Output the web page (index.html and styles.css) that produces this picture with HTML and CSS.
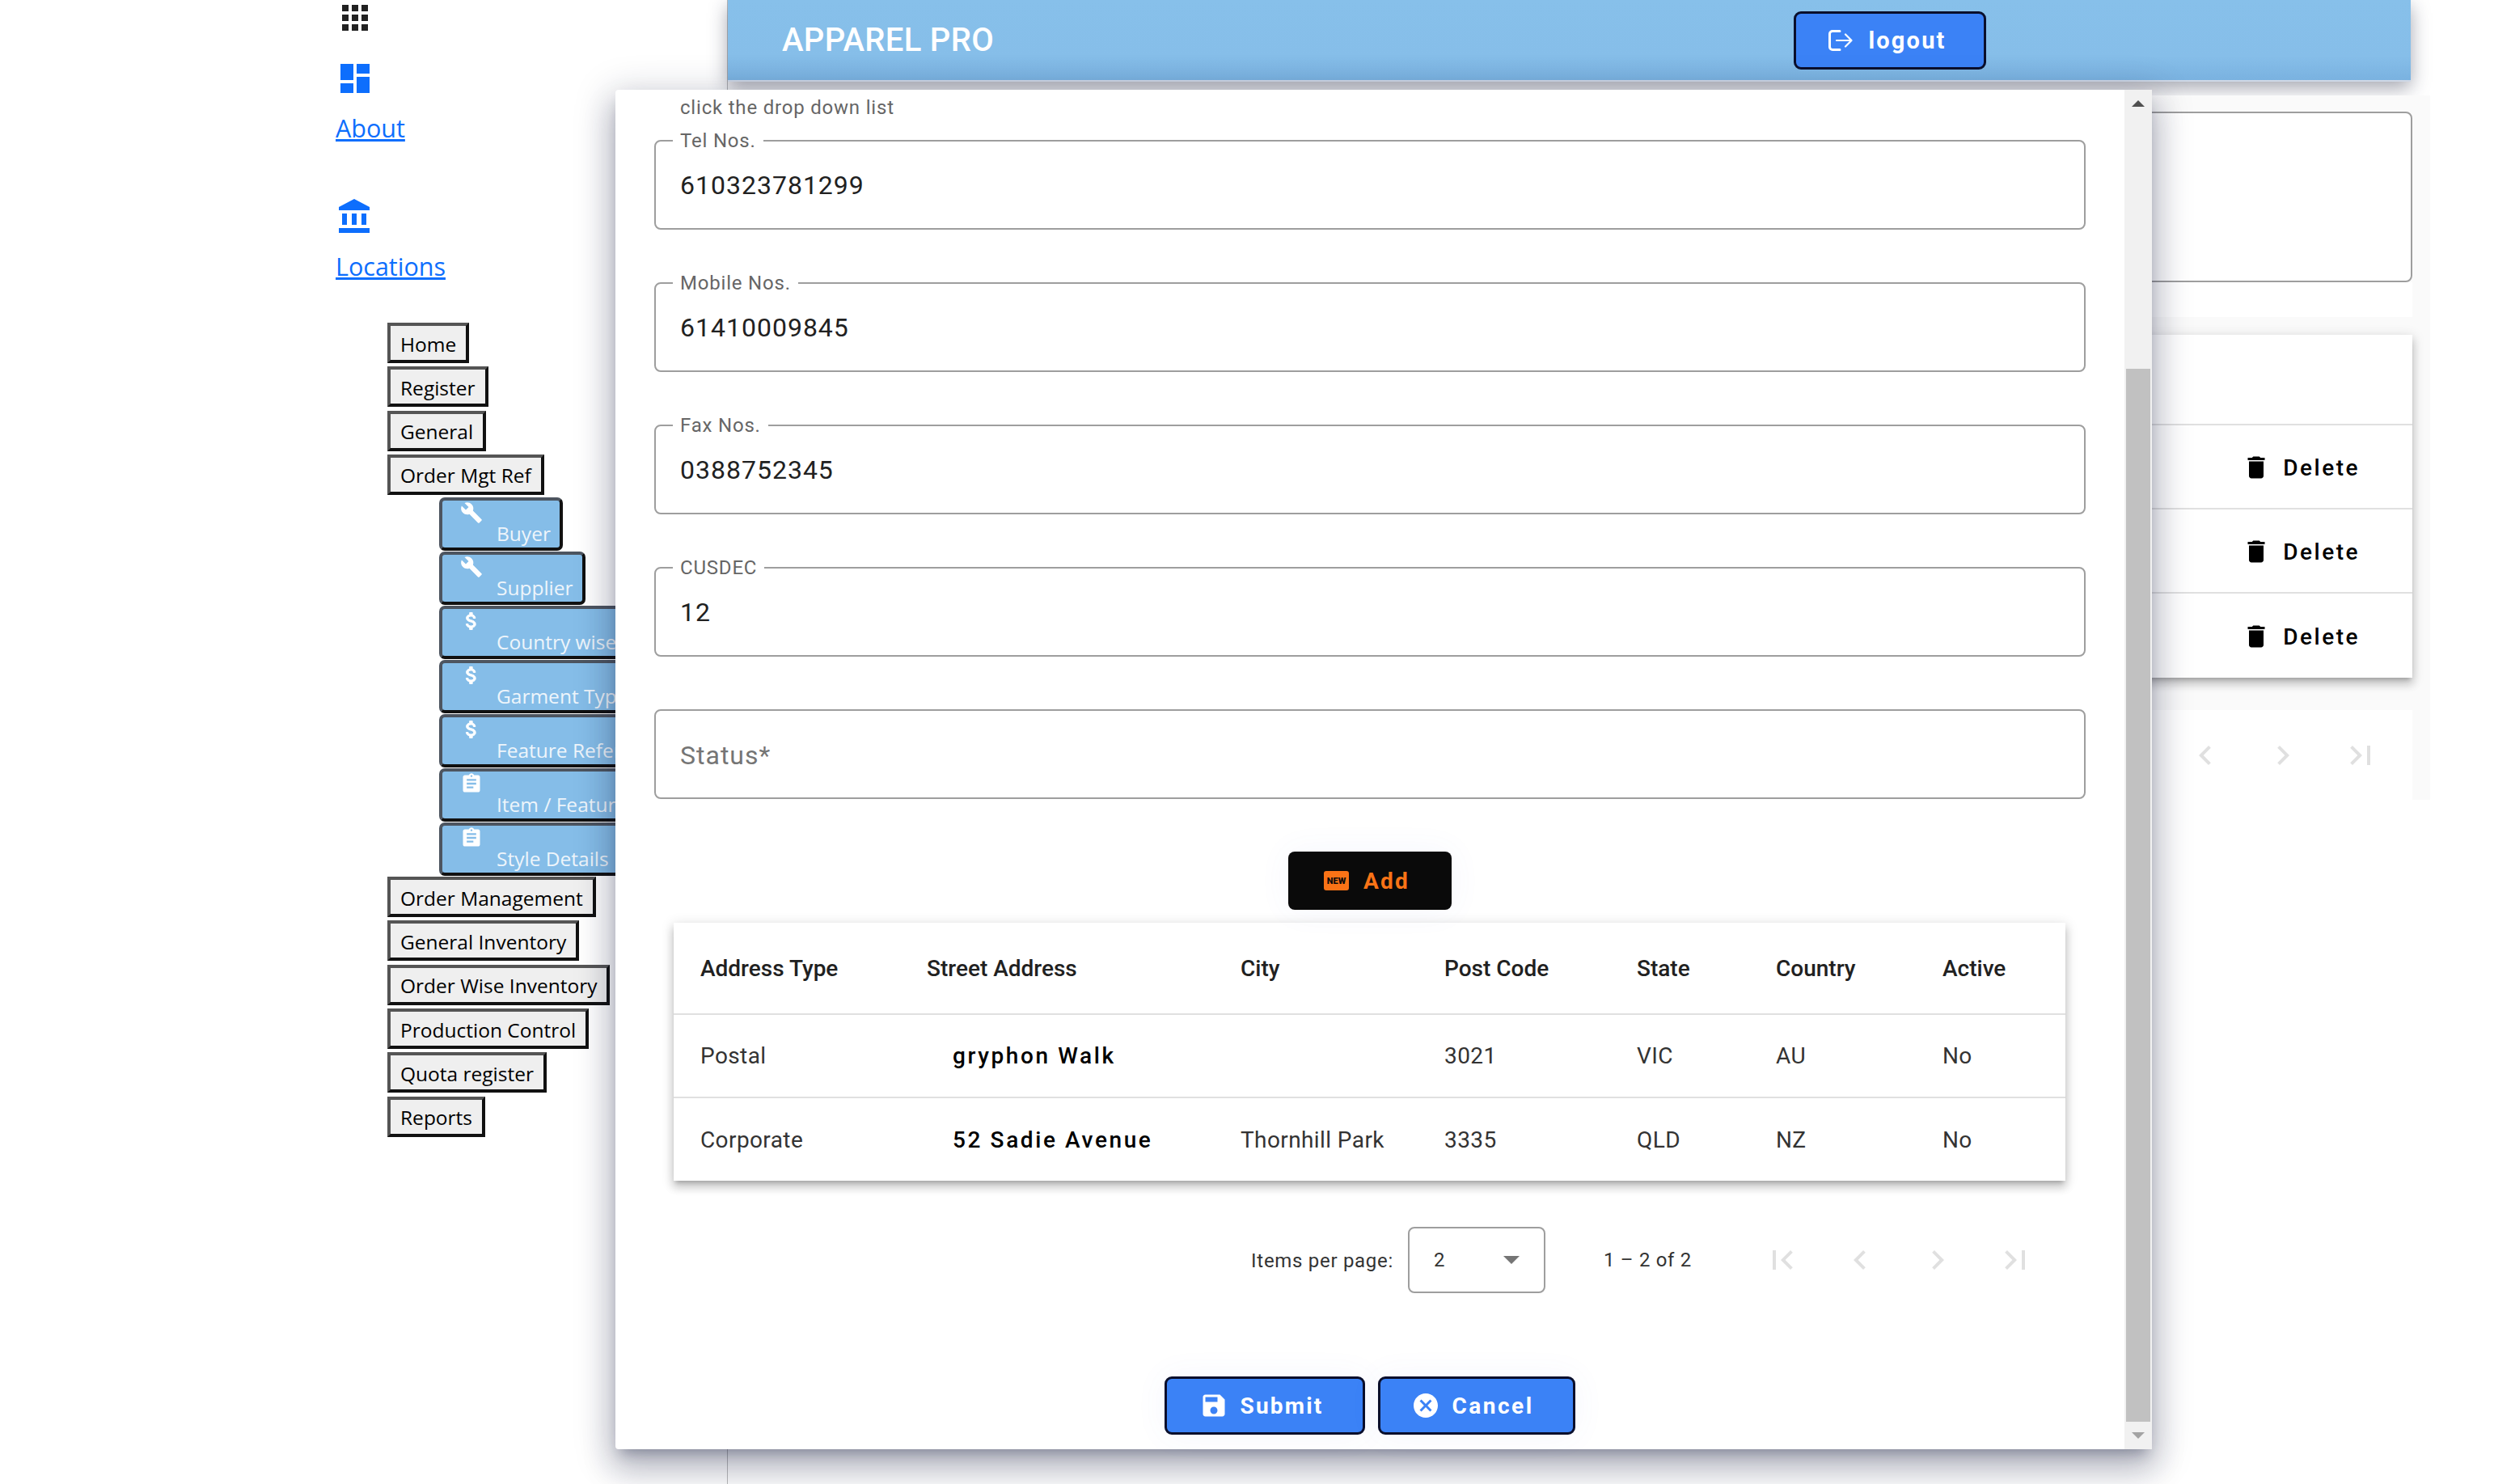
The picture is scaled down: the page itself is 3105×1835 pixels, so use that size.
FILE: index.html
```html
<!DOCTYPE html>
<html lang="en">
<head>
  <meta charset="UTF-8">
  <title>Apparel Pro</title>
  <link rel="stylesheet" href="styles.css">
</head>
<body>
  <!-- Side navigation -->
  <aside class="sidebar">
    <svg class="side-icon apps-icon" viewBox="0 0 24 24"><path d="M4 8h4V4H4v4zm6 12h4v-4h-4v4zm-6 0h4v-4H4v4zm0-6h4v-4H4v4zm6 0h4v-4h-4v4zm6-10v4h4V4h-4zm-6 4h4V4h-4v4zm6 6h4v-4h-4v4zm0 6h4v-4h-4v4z"/></svg>
    <svg class="side-icon" viewBox="0 0 24 24"><path d="M3 13h8V3H3v10zm0 8h8v-6H3v6zm10 0h8V11h-8v10zm0-18v6h8V3h-8z"/></svg>
    <a class="side-link" href="#">About</a>
    <svg class="side-icon" viewBox="0 0 24 24"><path d="M4 10v7h3v-7H4zm6 0v7h3v-7h-3zM2 22h19v-3H2v3zm14-12v7h3v-7h-3zm-4.5-9L2 6v2h19V6l-9.5-5z"/></svg>
    <a class="side-link" href="#">Locations</a>

    <nav class="menu">
      <button class="menu-btn">Home</button>
      <button class="menu-btn">Register</button>
      <button class="menu-btn">General</button>
      <button class="menu-btn">Order Mgt Ref</button>
      <div class="submenu">
        <button class="sub-btn">
          <svg viewBox="0 0 24 24"><path d="M22.7 19l-9.1-9.1c.9-2.3.4-5-1.5-6.9-2-2-5-2.4-7.4-1.3L9 6 6 9 1.6 4.7C.4 7.1.9 10.1 2.9 12.1c1.9 1.9 4.6 2.4 6.9 1.5l9.1 9.1c.4.4 1 .4 1.4 0l2.3-2.3c.5-.4.5-1.1.1-1.4z"/></svg>
          <span>Buyer</span>
        </button>
        <button class="sub-btn">
          <svg viewBox="0 0 24 24"><path d="M22.7 19l-9.1-9.1c.9-2.3.4-5-1.5-6.9-2-2-5-2.4-7.4-1.3L9 6 6 9 1.6 4.7C.4 7.1.9 10.1 2.9 12.1c1.9 1.9 4.6 2.4 6.9 1.5l9.1 9.1c.4.4 1 .4 1.4 0l2.3-2.3c.5-.4.5-1.1.1-1.4z"/></svg>
          <span>Supplier</span>
        </button>
        <button class="sub-btn">
          <svg class="money-icon" viewBox="0 0 24 24"><path d="M11.8 10.9c-2.27-.59-3-1.2-3-2.15 0-1.09 1.01-1.85 2.7-1.85 1.78 0 2.44.85 2.5 2.1h2.21c-.07-1.72-1.12-3.3-3.21-3.81V3h-3v2.16c-1.94.42-3.5 1.68-3.5 3.61 0 2.31 1.91 3.46 4.7 4.13 2.5.6 3 1.48 3 2.41 0 .69-.49 1.79-2.7 1.79-2.06 0-2.87-.92-2.98-2.1h-2.2c.12 2.19 1.76 3.42 3.68 3.83V21h3v-2.15c1.95-.37 3.5-1.5 3.5-3.55 0-2.84-2.43-3.81-4.7-4.4z"/></svg>
          <span>Country wise Reference</span>
        </button>
        <button class="sub-btn">
          <svg class="money-icon" viewBox="0 0 24 24"><path d="M11.8 10.9c-2.27-.59-3-1.2-3-2.15 0-1.09 1.01-1.85 2.7-1.85 1.78 0 2.44.85 2.5 2.1h2.21c-.07-1.72-1.12-3.3-3.21-3.81V3h-3v2.16c-1.94.42-3.5 1.68-3.5 3.61 0 2.31 1.91 3.46 4.7 4.13 2.5.6 3 1.48 3 2.41 0 .69-.49 1.79-2.7 1.79-2.06 0-2.87-.92-2.98-2.1h-2.2c.12 2.19 1.76 3.42 3.68 3.83V21h3v-2.15c1.95-.37 3.5-1.5 3.5-3.55 0-2.84-2.43-3.81-4.7-4.4z"/></svg>
          <span>Garment Type Reference</span>
        </button>
        <button class="sub-btn">
          <svg class="money-icon" viewBox="0 0 24 24"><path d="M11.8 10.9c-2.27-.59-3-1.2-3-2.15 0-1.09 1.01-1.85 2.7-1.85 1.78 0 2.44.85 2.5 2.1h2.21c-.07-1.72-1.12-3.3-3.21-3.81V3h-3v2.16c-1.94.42-3.5 1.68-3.5 3.61 0 2.31 1.91 3.46 4.7 4.13 2.5.6 3 1.48 3 2.41 0 .69-.49 1.79-2.7 1.79-2.06 0-2.87-.92-2.98-2.1h-2.2c.12 2.19 1.76 3.42 3.68 3.83V21h3v-2.15c1.95-.37 3.5-1.5 3.5-3.55 0-2.84-2.43-3.81-4.7-4.4z"/></svg>
          <span>Feature Reference</span>
        </button>
        <button class="sub-btn">
          <svg viewBox="0 0 24 24"><path d="M19 3h-4.18C14.4 1.84 13.3 1 12 1c-1.3 0-2.4.84-2.82 2H5c-1.1 0-2 .9-2 2v14c0 1.1.9 2 2 2h14c1.1 0 2-.9 2-2V5c0-1.1-.9-2-2-2zm-7 0c.55 0 1 .45 1 1s-.45 1-1 1-1-.45-1-1 .45-1 1-1zm2 14H7v-2h7v2zm3-4H7v-2h10v2zm0-4H7V7h10v2z"/></svg>
          <span>Item / Feature</span>
        </button>
        <button class="sub-btn">
          <svg viewBox="0 0 24 24"><path d="M19 3h-4.18C14.4 1.84 13.3 1 12 1c-1.3 0-2.4.84-2.82 2H5c-1.1 0-2 .9-2 2v14c0 1.1.9 2 2 2h14c1.1 0 2-.9 2-2V5c0-1.1-.9-2-2-2zm-7 0c.55 0 1 .45 1 1s-.45 1-1 1-1-.45-1-1 .45-1 1-1zm2 14H7v-2h7v2zm3-4H7v-2h10v2zm0-4H7V7h10v2z"/></svg>
          <span>Style Details</span>
        </button>
      </div>
      <button class="menu-btn">Order Management</button>
      <button class="menu-btn">General Inventory</button>
      <button class="menu-btn">Order Wise Inventory</button>
      <button class="menu-btn">Production Control</button>
      <button class="menu-btn">Quota register</button>
      <button class="menu-btn">Reports</button>
    </nav>
  </aside>

  <!-- Page behind the dialog -->
  <main class="main">
    <header class="topbar">
      <span class="brand">APPAREL PRO</span>
      <button class="blue-btn logout-btn">
        <svg class="logout-icon" viewBox="0 0 30 26"><path d="M14 1.5H5A3.5 3.5 0 0 0 1.5 5v16A3.5 3.5 0 0 0 5 24.5h9"/><path class="thin" d="M10 13h18.5M21 5.500l7.5 7.5-7.5 7.5"/></svg>
        logout
      </button>
    </header>

    <section class="panel">
      <div class="panel-field"></div>
      <div class="panel-gap"></div>
      <div class="card">
        <div class="card-row"></div>
        <div class="card-row">
          <svg viewBox="0 0 24 24"><path d="M6 19c0 1.1.9 2 2 2h8c1.1 0 2-.9 2-2V7H6v12zM19 4h-3.5l-1-1h-5l-1 1H5v2h14V4z"/></svg>
          <span>Delete</span>
        </div>
        <div class="card-row">
          <svg viewBox="0 0 24 24"><path d="M6 19c0 1.1.9 2 2 2h8c1.1 0 2-.9 2-2V7H6v12zM19 4h-3.5l-1-1h-5l-1 1H5v2h14V4z"/></svg>
          <span>Delete</span>
        </div>
        <div class="card-row">
          <svg viewBox="0 0 24 24"><path d="M6 19c0 1.1.9 2 2 2h8c1.1 0 2-.9 2-2V7H6v12zM19 4h-3.5l-1-1h-5l-1 1H5v2h14V4z"/></svg>
          <span>Delete</span>
        </div>
      </div>
      <div class="panel-pager">
        <svg viewBox="0 0 24 24"><path d="M15.41 7.41L14 6l-6 6 6 6 1.41-1.41L10.83 12z"/></svg>
        <svg viewBox="0 0 24 24"><path d="M10 6L8.59 7.41 13.17 12l-4.58 4.59L10 18l6-6z"/></svg>
        <svg viewBox="0 0 24 24"><path d="M5.59 7.41L10.18 12l-4.59 4.59L7 18l6-6-6-6zM16 6h2v12h-2z"/></svg>
      </div>
    </section>
  </main>

  <!-- Address dialog -->
  <div class="dialog">
    <div class="dialog-body">
      <p class="hint">click the drop down list</p>

      <div class="field">
        <label class="field-label">Tel Nos.</label>
        <span class="field-value">610323781299</span>
      </div>
      <div class="field">
        <label class="field-label">Mobile Nos.</label>
        <span class="field-value">61410009845</span>
      </div>
      <div class="field">
        <label class="field-label">Fax Nos.</label>
        <span class="field-value">0388752345</span>
      </div>
      <div class="field">
        <label class="field-label">CUSDEC</label>
        <span class="field-value">12</span>
      </div>
      <div class="field">
        <span class="field-value placeholder">Status*</span>
      </div>

      <div class="add-wrap">
        <button class="add-btn"><span class="new-badge">NEW</span>Add</button>
      </div>

      <table class="address-table">
        <thead>
          <tr>
            <th class="col-type">Address Type</th>
            <th class="col-street">Street Address</th>
            <th class="col-city">City</th>
            <th class="col-post">Post Code</th>
            <th class="col-state">State</th>
            <th class="col-country">Country</th>
            <th class="col-active">Active</th>
          </tr>
        </thead>
        <tbody>
          <tr>
            <td class="col-type">Postal</td>
            <td class="col-street"><span class="street">gryphon Walk</span></td>
            <td></td>
            <td>3021</td>
            <td>VIC</td>
            <td>AU</td>
            <td>No</td>
          </tr>
          <tr>
            <td class="col-type">Corporate</td>
            <td class="col-street"><span class="street">52 Sadie Avenue</span></td>
            <td>Thornhill Park</td>
            <td>3335</td>
            <td>QLD</td>
            <td>NZ</td>
            <td>No</td>
          </tr>
        </tbody>
      </table>

      <div class="pager">
        <span class="pager-label">Items per page:</span>
        <div class="pager-select"><span>2</span><i class="select-arrow"></i></div>
        <span class="pager-range">1 – 2 of 2</span>
        <div class="pager-icons">
          <svg viewBox="0 0 24 24"><path d="M18.41 16.59L13.82 12l4.59-4.59L17 6l-6 6 6 6zM6 6h2v12H6z"/></svg>
          <svg viewBox="0 0 24 24"><path d="M15.41 7.41L14 6l-6 6 6 6 1.41-1.41L10.83 12z"/></svg>
          <svg viewBox="0 0 24 24"><path d="M10 6L8.59 7.41 13.17 12l-4.58 4.59L10 18l6-6z"/></svg>
          <svg viewBox="0 0 24 24"><path d="M5.59 7.41L10.18 12l-4.59 4.59L7 18l6-6-6-6zM16 6h2v12h-2z"/></svg>
        </div>
      </div>

      <div class="actions">
        <button class="blue-btn submit-btn">
          <svg viewBox="0 0 24 24"><path d="M17 3H5c-1.11 0-2 .9-2 2v14c0 1.1.89 2 2 2h14c1.1 0 2-.9 2-2V7l-4-4zm-5 16c-1.66 0-3-1.34-3-3s1.34-3 3-3 3 1.34 3 3-1.34 3-3 3zm3-10H5V5h10v4z"/></svg>
          Submit
        </button>
        <button class="blue-btn cancel-btn">
          <svg viewBox="0 0 24 24"><path d="M12 2C6.47 2 2 6.47 2 12s4.47 10 10 10 10-4.47 10-10S17.53 2 12 2zm5 13.59L15.59 17 12 13.41 8.41 17 7 15.59 10.59 12 7 8.41 8.41 7 12 10.59 15.59 7 17 8.41 13.41 12 17 15.59z"/></svg>
          Cancel
        </button>
      </div>
    </div>

    <div class="scrollbar">
      <i class="scroll-up"></i>
      <div class="scroll-thumb"></div>
      <i class="scroll-down"></i>
    </div>
  </div>
</body>
</html>
```

FILE: styles.css
```css
/* General Styles */
html, body {
  margin: 0;
  padding: 0;
  height: 1835px;
  overflow: hidden;
  background: #fff;
  font-family: Roboto, Arial, sans-serif;
}

body {
  display: flex;
  position: relative;
}

/* Sidebar */
.sidebar {
  width: 484px;
  padding-left: 415px;
  flex-shrink: 0;
  font-family: "Open Sans", Arial, sans-serif;
}

.side-icon {
  display: block;
  width: 48px;
  height: 48px;
  fill: #0d6efd;
  margin-top: 62px;
}

.apps-icon {
  fill: #212121;
  margin-top: -2px;
  margin-bottom: -35px;
}

.side-link {
  display: block;
  margin-top: 13px;
  font-size: 30.5px;
  line-height: 48px;
  color: #0d6efd;
}

.menu {
  margin-top: 46px;
  margin-left: 64px;
  display: flex;
  flex-direction: column;
  align-items: flex-start;
}

.menu-btn {
  height: 50px;
  margin-bottom: 4.3px;
  padding: 2px 12px 0;
  font-family: inherit;
  font-size: 24.5px;
  color: #000;
  background: #efefef;
  border: 4px solid;
  border-color: #555 #111 #111 #555;
  white-space: nowrap;
}

.submenu {
  margin-left: 64px;
  margin-top: -1px;
  display: flex;
  flex-direction: column;
  align-items: flex-start;
}

.sub-btn {
  height: 66px;
  margin-bottom: 1px;
  padding: 1px 11px 0 0;
  display: flex;
  flex-direction: column;
  align-items: flex-start;
  font-family: inherit;
  font-size: 24.5px;
  line-height: 30px;
  color: #eef5fb;
  background: #85bde8;
  border: 4px solid;
  border-color: #4d5560 #111 #111 #4d5560;
  border-radius: 7px;
  white-space: nowrap;
}

.sub-btn svg {
  width: 28px;
  height: 28px;
  fill: #fff;
  margin-left: 22px;
}

.sub-btn .money-icon {
  stroke: #fff;
  stroke-width: 0.8;
}

.sub-btn span {
  margin-top: -3px;
  margin-left: 67px;
}

/* Main page */
.main {
  flex: 1;
  border-left: 1px solid #bbb;
}

.topbar {
  height: 99px;
  margin-right: 124px;
  padding-left: 67px;
  display: flex;
  align-items: center;
  background: linear-gradient(#87c0ea, #86bee9 70%, #7ab2e0);
  border-bottom: 2px solid #cfd8e6;
  box-shadow: 0 8px 22px rgba(30, 35, 60, 0.4);
  position: relative;
}

.brand {
  font-size: 40px;
  font-weight: 500;
  letter-spacing: 0.3px;
  color: #fff;
}

.blue-btn {
  display: flex;
  align-items: center;
  justify-content: center;
  height: 72px;
  font-family: Roboto, Arial, sans-serif;
  font-size: 28px;
  font-weight: 700;
  letter-spacing: 2.2px;
  color: #fff;
  background: #3b82f6;
  border: 3px solid #0a0f2c;
  border-radius: 9px;
  box-sizing: border-box;
}

.blue-btn svg {
  width: 36px;
  height: 36px;
  fill: #fff;
  margin-right: 14px;
}

.blue-btn .logout-icon {
  width: 30px;
  height: 26px;
  margin-right: 19px;
  fill: none;
  stroke: #fff;
  stroke-width: 3;
  stroke-linecap: round;
  stroke-linejoin: round;
}

.logout-icon .thin {
  stroke-width: 2.2;
}

.logout-btn {
  width: 238px;
  margin-left: auto;
  margin-right: 525px;
  padding: 0 6px 0 0;
  font-size: 29px;
}

.panel {
  height: 851px;
  margin-top: 17px;
  margin-right: 100px;
  padding: 20px 22px 0 0;
  background: #fafafa;
  position: relative;
  display: flex;
  flex-direction: column;
}

.panel-field {
  height: 207px;
  background: #fff;
  border: 2px solid #9e9e9e;
  border-radius: 8px;
}

.panel-gap {
  height: 43px;
  background: #fff;
}

.card {
  margin-top: 22px;
  background: #fff;
  box-shadow: 0 5px 5px -3px rgba(0, 0, 0, 0.2), 0 8px 10px 1px rgba(0, 0, 0, 0.14), 0 3px 14px 2px rgba(0, 0, 0, 0.12);
}

.card-row {
  height: 100px;
  padding: 2px 65px 0 0;
  display: flex;
  align-items: center;
  justify-content: flex-end;
  font-size: 28px;
  font-weight: 500;
  letter-spacing: 2.5px;
  color: #000;
  border-bottom: 2px solid #e0e0e0;
}

.card-row:first-child {
  height: 108px;
}

.card-row:last-child {
  height: 102px;
  border-bottom: none;
}

.card-row svg {
  width: 36px;
  height: 36px;
  margin-right: 15px;
}

.panel-pager {
  height: 111px;
  margin-top: 40px;
  padding-right: 40px;
  display: flex;
  align-items: center;
  justify-content: flex-end;
  gap: 48px;
  background: #fff;
}

.panel-pager svg {
  width: 48px;
  height: 48px;
  fill: #e0e0e0;
}

/* Dialog */
.dialog {
  position: absolute;
  left: 761px;
  top: 111px;
  width: 1900px;
  height: 1681px;
  display: flex;
  background: #fff;
  border-radius: 4px 0 0 4px;
  box-shadow: 0 11px 15px -7px rgba(20, 25, 60, 0.3), 0 24px 38px 3px rgba(20, 25, 60, 0.2), 0 9px 46px 8px rgba(20, 25, 60, 0.18);
}

.dialog-body {
  flex: 1;
  padding: 0 48px;
}

.hint {
  margin: 8px 0 26px;
  padding-left: 32px;
  font-size: 24px;
  line-height: 28px;
  letter-spacing: 0.8px;
  color: #666;
}

.field {
  position: relative;
  height: 107px;
  margin-bottom: 65px;
  padding-left: 30px;
  display: flex;
  align-items: center;
  border: 2px solid #9e9e9e;
  border-radius: 8px;
}

.field-label {
  position: absolute;
  left: 21px;
  top: -15px;
  padding: 0 9px;
  font-size: 24px;
  line-height: 28px;
  letter-spacing: 0.8px;
  color: #666;
  background: #fff;
}

.field-value {
  font-size: 32px;
  letter-spacing: 1px;
  color: #212121;
}

.placeholder {
  margin-top: 2px;
  color: #757575;
}

.add-wrap {
  display: flex;
  justify-content: center;
}

.add-btn {
  width: 202px;
  height: 72px;
  padding: 0 8px 0 0;
  display: flex;
  align-items: center;
  justify-content: center;
  font-family: Roboto, Arial, sans-serif;
  font-size: 28px;
  font-weight: 700;
  letter-spacing: 2.2px;
  color: #f97316;
  background: #0a0a0a;
  border: none;
  border-radius: 8px;
  box-shadow: 0 0 40px rgba(80, 100, 220, 0.06);
}

.new-badge {
  width: 31px;
  height: 24px;
  margin-right: 18px;
  display: flex;
  align-items: center;
  justify-content: center;
  font-size: 11px;
  font-weight: 900;
  letter-spacing: 0;
  color: #0a0a0a;
  background: #f97316;
  border-radius: 3px;
}

.address-table {
  width: 1721px;
  margin: 16px 0 0 24px;
  table-layout: fixed;
  border-collapse: collapse;
  background: #fff;
  box-shadow: 0 5px 5px -3px rgba(0, 0, 0, 0.2), 0 8px 10px 1px rgba(0, 0, 0, 0.14), 0 3px 14px 2px rgba(0, 0, 0, 0.12);
}

.address-table th {
  height: 112px;
  padding: 0;
  text-align: left;
  font-size: 28px;
  font-weight: 500;
  color: #212121;
  border-bottom: 2px solid #e0e0e0;
}

.address-table td {
  height: 101px;
  padding: 0;
  font-size: 28px;
  letter-spacing: 0.4px;
  color: #333;
  border-bottom: 2px solid #e0e0e0;
}

.address-table tr:last-child td {
  height: 102px;
  border-bottom: none;
}

.address-table .col-type { width: 280px; padding-left: 33px; }
.address-table .col-street { width: 388px; }
.address-table .col-city { width: 252px; }
.address-table .col-post { width: 238px; }
.address-table .col-state { width: 172px; }
.address-table .col-country { width: 206px; }
.address-table .col-active { width: 152px; }

.street {
  padding-left: 32px;
  font-weight: 500;
  letter-spacing: 2.6px;
  color: #000;
}

.pager {
  height: 82px;
  margin-top: 57px;
  padding-right: 63px;
  display: flex;
  align-items: center;
  justify-content: flex-end;
  font-size: 24px;
  color: #333;
}

.pager-label {
  margin-top: 2px;
  margin-right: 18px;
  letter-spacing: 0.7px;
}

.pager-select {
  height: 78px;
  padding: 0 30px;
  width: 106px;
  display: flex;
  align-items: center;
  justify-content: space-between;
  border: 2px solid #9e9e9e;
  border-radius: 8px;
}

.select-arrow {
  width: 0;
  height: 0;
  border-left: 10px solid transparent;
  border-right: 10px solid transparent;
  border-top: 10px solid #757575;
}

.pager-range {
  margin: 0 88px 0 72px;
  letter-spacing: 0.7px;
}

.pager-icons {
  display: flex;
  gap: 48px;
}

.pager-icons svg {
  width: 48px;
  height: 48px;
  fill: #e0e0e0;
}

.actions {
  margin-top: 103px;
  display: flex;
  justify-content: center;
  gap: 16px;
}

.actions .blue-btn {
  box-shadow: 0 0 40px rgba(80, 100, 220, 0.06);
}

.submit-btn { width: 248px; padding: 0 8px 0 0; }
.cancel-btn { width: 244px; padding: 0 10px 0 0; letter-spacing: 2.5px; }

/* Scrollbar */
.scrollbar {
  width: 34px;
  display: flex;
  flex-direction: column;
  align-items: center;
  background: #f1f1f1;
}

.scroll-up, .scroll-down {
  width: 0;
  height: 0;
  margin: 13px 0;
  border-left: 8px solid transparent;
  border-right: 8px solid transparent;
}

.scroll-up { border-bottom: 8px solid #505050; }
.scroll-down { border-top: 8px solid #a3a3a3; }

.scroll-thumb {
  width: 30px;
  margin-top: 311px;
  flex: 1;
  background: #c1c1c1;
}
```
